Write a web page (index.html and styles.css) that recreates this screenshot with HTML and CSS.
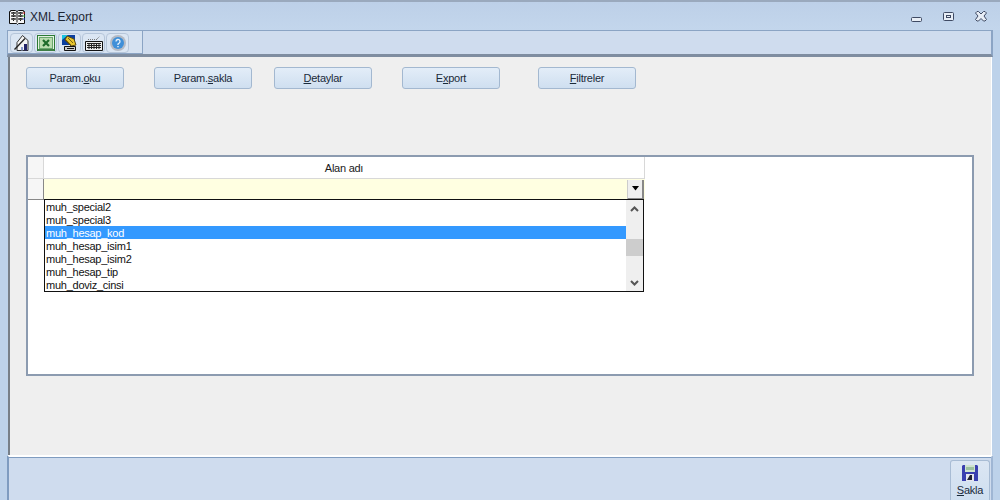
FILE: index.html
```html
<!DOCTYPE html>
<html lang="tr">
<head>
<meta charset="utf-8">
<title>XML Export</title>
<link rel="stylesheet" href="styles.css">
</head>
<body>
<div class="window">
  <header class="titlebar">
    <svg class="appicon" width="16" height="16" viewBox="0 0 16 16"><path d="M.5 14.500V2.500h1V1.500h5l1.500 1 1.500-1h5v1h1v12h-6l-1 1-1-1z" fill="#f6f6f6" stroke="#111"/><path d="M8 2.500v11" stroke="#111"/><path d="M2.500 3.500h4v1h-4zM2.500 6.500h4v1h-4zM2.500 9.500h4v1h-4zM9.500 3.500h4v1h-4zM9.500 6.500h4v1h-4zM9.500 9.500h4v1h-4z" fill="#999" stroke="#222" stroke-width=".7"/><path d="M4.500 3v9M11.500 3v9" stroke="#222" stroke-dasharray="1 1"/><path d="M15 3v2" stroke="#d22"/><path d="M15 6v2" stroke="#2a2"/><path d="M15 9v2" stroke="#24c"/></svg>
    <span class="title">XML Export</span>
    <div class="winbtns">
      <svg width="12" height="12" viewBox="0 0 12 12"><rect x=".5" y="6.500" width="10" height="4" rx="1" fill="#e8eef6" stroke="#3f4a63"/></svg>
      <svg width="12" height="12" viewBox="0 0 12 12"><rect x=".5" y="1.500" width="10" height="8" rx="1" fill="#e8eef6" stroke="#3f4a63"/><rect x="3.500" y="4.500" width="4" height="2" fill="none" stroke="#3f4a63"/></svg>
      <svg width="12" height="12" viewBox="0 0 12 12"><path d="M.5 2L2 .5h1.500L6 3 8.500.5H10L11.500 2 9 5l2.500 3.500L10 10H8.500L6 7.500 3.500 10H2L.5 8.500 3 5z" fill="#e8eef6" stroke="#3f4a63"/></svg>
    </div>
  </header>
  <div class="toolband">
    <div class="toolgroup">
      <span class="tool"><svg width="18" height="18" viewBox="0 0 18 18"><path d="M9.500 1.500l5.500 5v10H4v-8z" fill="#f4f4f4" stroke="#333"/><path d="M1.500 15.500L12 4.500" stroke="#222" stroke-width="1.300"/><path d="M8 13h2v3.500H8z" fill="#89c"/><path d="M11 10h3v6.500h-3z" fill="#226"/></svg></span>
      <span class="tool"><svg width="18" height="18" viewBox="0 0 18 18"><rect x=".5" y="1.500" width="17" height="15" fill="#e7f2e2" stroke="#2c7a34"/><rect x="2.500" y="3.500" width="13" height="11" fill="#b9dcae" stroke="#6aa86e"/><path d="M6 6l6 6M12 6l-6 6" stroke="#1d6b2a" stroke-width="2.200"/><rect x="1" y="15" width="16" height="2" fill="#3f7f45"/></svg></span>
      <span class="tool"><svg width="18" height="18" viewBox="0 0 18 18"><path d="M1 1h13v10H1z" fill="#0c3f9e"/><path d="M1 1h6L1 6z" fill="#1cc4e0"/><path d="M6 2l7 3 2 6-5 1-6-6z" fill="#e8c52e" stroke="#5a4a10"/><path d="M7 4l5 5M5 6l5 5" stroke="#7a6410"/><path d="M3.500 12.500h11v4h-11z" fill="#ccc" stroke="#111"/><path d="M6 14.500h7" stroke="#111"/></svg></span>
      <span class="tool"><svg width="18" height="18" viewBox="0 0 18 18"><path d="M.5 7.500h17v9H.5z" fill="#eee" stroke="#111"/><path d="M2 9.500h14M2 11.500h14M2 13.500h14M4 9v6M6.500 9v6M9 9v6M11.500 9v6M14 9v6" stroke="#222"/><path d="M3 5.500h9M12 5l3-3" stroke="#777" stroke-dasharray="1 1"/></svg></span>
      <span class="tool"><svg width="18" height="18" viewBox="0 0 18 18"><circle cx="9" cy="9" r="8" fill="#b4bac4"/><circle cx="9" cy="9" r="6" fill="#3f8fd8"/><path d="M7 7.500a2 2 0 1 1 3 1.700L9 10v1" fill="none" stroke="#e8f2fb" stroke-width="1.300"/><path d="M8.300 12h1.400v1.300H8.300z" fill="#e8f2fb"/></svg></span>
    </div>
  </div>
  <main class="panel">
    <div class="actions">
      <button class="btn">Param.<u>o</u>ku</button>
      <button class="btn">Param.<u>s</u>akla</button>
      <button class="btn"><u>D</u>etaylar</button>
      <button class="btn">E<u>x</u>port</button>
      <button class="btn"><u>F</u>iltreler</button>
    </div>
    <section class="grid">
      <div class="grid-row head">
        <div class="indicator"></div>
        <div class="cell">Alan adı</div>
      </div>
      <div class="grid-row edit">
        <div class="indicator current"></div>
        <div class="cell yellow">
          <span class="ddbtn"><svg width="9" height="5" viewBox="0 0 9 5"><path d="M1 0h7L4.500 4.500z" fill="#000"/></svg></span>
        </div>
      </div>
      <div class="dropdown">
        <ul class="list">
          <li>muh_special2</li>
          <li>muh_special3</li>
          <li class="sel">muh_hesap_kod</li>
          <li>muh_hesap_isim1</li>
          <li>muh_hesap_isim2</li>
          <li>muh_hesap_tip</li>
          <li>muh_doviz_cinsi</li>
        </ul>
        <div class="scroll">
          <svg width="9" height="6" viewBox="0 0 9 6"><path d="M1 5l3.500-3.500L8 5" fill="none" stroke="#555" stroke-width="2"/></svg>
          <div class="track"><div class="thumb"></div></div>
          <svg width="9" height="6" viewBox="0 0 9 6"><path d="M1 1l3.500 3.500L8 1" fill="none" stroke="#555" stroke-width="2"/></svg>
        </div>
      </div>
    </section>
  </main>
  <footer class="footer">
    <button class="savebtn">
      <svg width="18" height="18" viewBox="0 0 18 18"><path d="M2 1h14l1 1v15H1V2z" fill="#3a3fb0"/><path d="M4 1h10v7H4z" fill="#cfe3d0"/><path d="M5 3h8v3H5z" fill="#9cc0a0"/><path d="M5 10h8v7H5z" fill="#e6e6ee"/><path d="M6 16l3-5h2v5z" fill="#223"/></svg>
      <span><u>S</u>akla</span>
    </button>
  </footer>
</div>
</body>
</html>
```
FILE: styles.css
```css
* { box-sizing: border-box; }
html, body { margin: 0; padding: 0; }
body {
  width: 1000px;
  height: 500px;
  overflow: hidden;
  font-family: "Liberation Sans", Arial, sans-serif;
  font-size: 11px;
  letter-spacing: -0.25px;
  color: #1a1a1a;
}
.window {
  width: 1000px;
  height: 500px;
  display: flex;
  flex-direction: column;
  background: #bdd2ea;
  border-top: 2px solid #9aa9bd;
}
.titlebar {
  height: 28px;
  flex: none;
  display: flex;
  align-items: center;
  padding: 2px 13px 0 9px;
  background: linear-gradient(#bdd0e8, #c3d6ec);
}
.appicon { flex: none; }
.title {
  margin-left: 5px;
  font-size: 12px;
  letter-spacing: 0;
  color: #1d2633;
}
.winbtns {
  margin-left: auto;
  display: flex;
  gap: 20px;
}
.toolband {
  height: 27px;
  flex: none;
  margin: 0 7px 0 7px;
  background: #cfdcee;
  border: 1px solid #8ba4c4;
  border-bottom: 3px solid #7f8da0;
  border-right-width: 2px;
  display: flex;
}
.toolgroup {
  width: 135px;
  height: 23px;
  display: flex;
  gap: 1px;
  padding: 2px 0 0 2px;
  border-right: 1px solid #8ba4c4;
  border-bottom: 1px solid #8ba4c4;
  background: #d6e2f1;
}
.tool {
  width: 23px;
  height: 20px;
  display: flex;
  align-items: center;
  justify-content: center;
  border: 1px solid #b6c6da;
  border-radius: 4px;
  background: #dbe6f3;
}
.panel {
  flex: 1;
  min-height: 0;
  margin: 0 8px 0 8px;
  background: #efefef;
  border-left: 2px solid #777f88;
  border-right: 1px solid #fff;
  padding: 10px 17px 0 16px;
  display: flex;
  flex-direction: column;
}
.actions {
  display: flex;
  height: 22px;
  flex: none;
}
.btn {
  width: 98px;
  height: 22px;
  padding: 0;
  font: inherit;
  letter-spacing: inherit;
  color: #1a2a3a;
  border: 1px solid #a3b8d0;
  border-radius: 3px;
  background: linear-gradient(#e3edf8, #cfdff0);
}
.btn:nth-child(1) { margin-right: 30px; }
.btn:nth-child(2) { margin-right: 22px; }
.btn:nth-child(3) { margin-right: 30px; }
.btn:nth-child(4) { margin-right: 38px; }
.grid {
  position: relative;
  margin-top: 66px;
  height: 221px;
  background: #fff;
  border: 2px solid #8c9bb0;
  flex: none;
}
.grid-row { display: flex; }
.head { height: 22px; }
.edit { height: 21px; }
.indicator {
  width: 16px;
  flex: none;
  background: #f6f6f6;
  border-right: 1px solid #d8d8d8;
  border-bottom: 1px solid #d8d8d8;
}
.indicator.current {
  border-right: 1px solid #888;
  border-bottom: 1px solid #888;
}
.cell {
  width: 601px;
  flex: none;
  display: flex;
  align-items: center;
  justify-content: center;
  border-right: 1px solid #d8d8d8;
  border-bottom: 1px solid #d8d8d8;
}
.yellow {
  background: #ffffe1;
  justify-content: flex-end;
  padding: 0 1px 0 0;
  border-right: none;
  border-bottom: none;
}
.ddbtn {
  width: 17px;
  height: 20px;
  display: flex;
  align-items: center;
  justify-content: center;
  background: #efefef;
  border-left: 1px solid #ccc;
  border-right: 2px solid #888;
  border-bottom: 2px solid #888;
}
.dropdown {
  position: absolute;
  left: 16px;
  top: 42px;
  width: 600px;
  height: 93px;
  display: flex;
  background: #fff;
  border: 1px solid #111;
}
.list {
  list-style: none;
  margin: 0;
  padding: 0;
  flex: 1;
  min-width: 0;
}
.list li {
  height: 13px;
  line-height: 15px;
  padding-left: 1px;
  color: #111;
  white-space: nowrap;
  overflow: hidden;
}
.list li:first-child { margin-top: 0; }
.list li.sel { background: #3399ff; color: #fff; }
.scroll {
  width: 17px;
  flex: none;
  background: #efefef;
  display: flex;
  flex-direction: column;
  align-items: center;
  padding: 6px 0 5px;
}
.track {
  flex: 1;
  align-self: stretch;
  padding-top: 27px;
}
.thumb {
  height: 17px;
  background: #cdcdcd;
}
.footer {
  height: 45px;
  flex: none;
  margin: 0 7px 0 7px;
  background: #cfdcee;
  border-top: 2px solid #fff;
  border-left: 2px solid #7f9cc0;
  border-right: 2px solid #9fb6d4;
  box-shadow: inset 0 1px 0 #7f9cc0;
  display: flex;
  justify-content: flex-end;
  align-items: flex-end;
  padding-right: 1px;
}
.savebtn {
  width: 40px;
  height: 40px;
  padding: 3px 0 0;
  font: inherit;
  letter-spacing: inherit;
  color: #1a2a3a;
  display: flex;
  flex-direction: column;
  align-items: center;
  border: 1px solid #a8bcd4;
  border-bottom: none;
  border-radius: 3px 3px 0 0;
  background: linear-gradient(#dbe6f3, #cfdff0);
}
.savebtn span { line-height: 15px; margin-top: 1px; }
```
